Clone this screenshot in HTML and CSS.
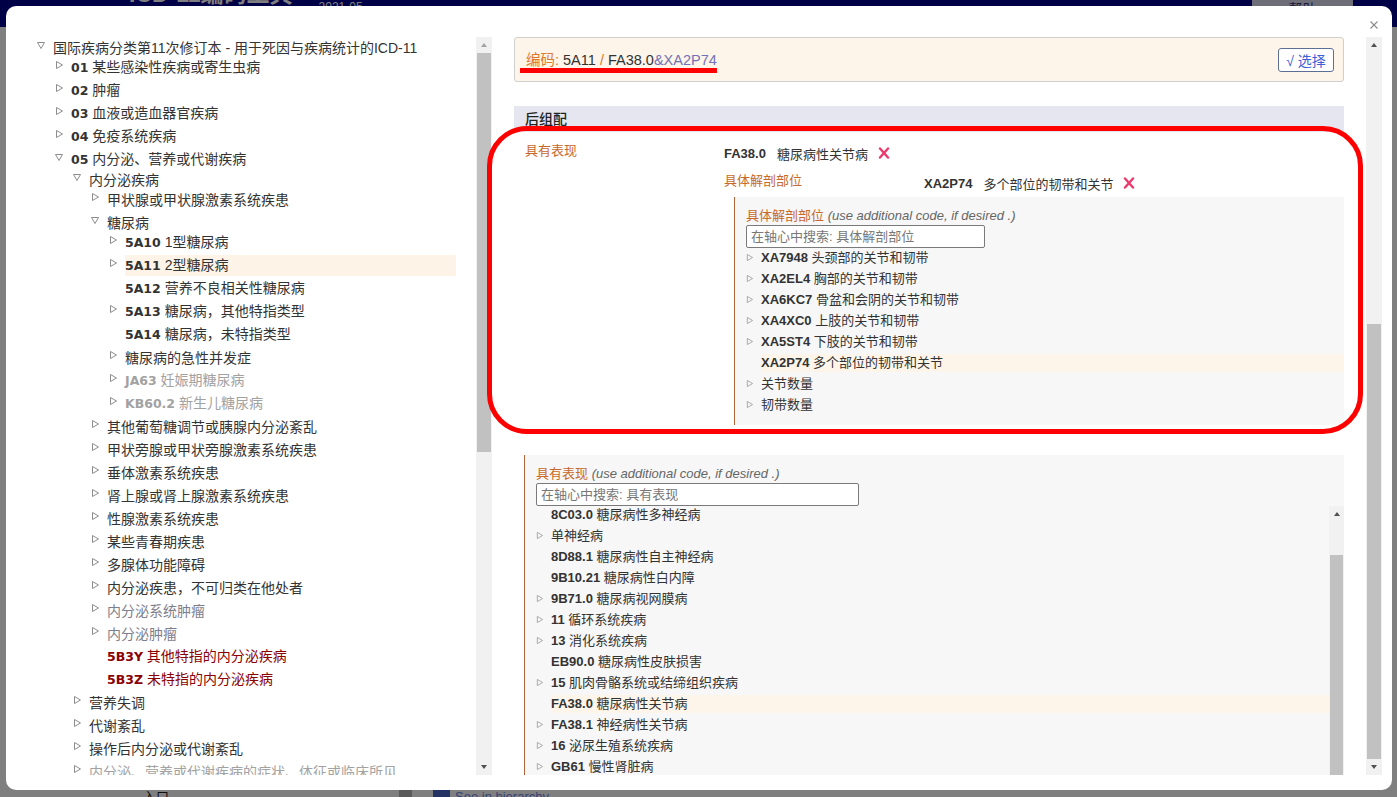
FILE: index.html
```html
<!DOCTYPE html>
<html lang="zh-CN">
<head>
  <meta charset="UTF-8">
  <title>ICD-11编码工具</title>
  <meta name="viewport" content="width=device-width, initial-scale=1.0">
  <link rel="stylesheet" href="styles.css">
</head>
<body>

  <header class="topbar">
    <div class="brand">ICD-11编码工具</div>
    <div class="release">2021-05</div>
    <div class="help-btn">帮助</div>
  </header>
  <main class="page"></main>
  <footer class="page-foot">
    <span class="entry">入口</span>
    <span class="divider"></span>
    <span class="badge"></span>
    <span class="hier">See in hierarchy</span>
  </footer>

  <div class="backdrop"></div>

  <div class="modal">
    <svg class="defs" width="0" height="0">
      <symbol id="tr" viewBox="0 0 8 8"><path d="M1.5 0.5 L7.5 4 L1.5 7.5 Z" fill="none" stroke="currentColor" stroke-width="1"/></symbol>
      <symbol id="td" viewBox="0 0 8 8"><path d="M0.5 1.5 L7.5 1.5 L4 7.5 Z" fill="none" stroke="currentColor" stroke-width="1"/></symbol>
      <symbol id="rm" viewBox="0 0 12 12"><path d="M2 1.5 L10 10.5 M10 1.5 L2 10.5" stroke="currentColor" stroke-width="2.4" stroke-linecap="round"/></symbol>
    </svg>

    <button class="close"><svg width="8" height="8" viewBox="0 0 8 8"><path d="M0.5 0.5 L7.5 7.5 M7.5 0.5 L0.5 7.5" stroke="currentColor" stroke-width="1.1"/></svg></button>

    <!-- left: classification tree -->
    <section class="pane">
      <div class="tree-wrap">
        <ul class="tree">
          <li class="open">
            <div class="row"><svg class="tw"><use href="#td"/></svg><span class="lbl">国际疾病分类第11次修订本 - 用于死因与疾病统计的ICD-11</span></div>
            <ul>
              <li><div class="row"><svg class="tw"><use href="#tr"/></svg><span class="lbl"><b>01</b> 某些感染性疾病或寄生虫病</span></div></li>
              <li><div class="row"><svg class="tw"><use href="#tr"/></svg><span class="lbl"><b>02</b> 肿瘤</span></div></li>
              <li><div class="row"><svg class="tw"><use href="#tr"/></svg><span class="lbl"><b>03</b> 血液或造血器官疾病</span></div></li>
              <li><div class="row"><svg class="tw"><use href="#tr"/></svg><span class="lbl"><b>04</b> 免疫系统疾病</span></div></li>
              <li class="open">
                <div class="row"><svg class="tw"><use href="#td"/></svg><span class="lbl"><b>05</b> 内分泌、营养或代谢疾病</span></div>
                <ul>
                  <li class="open">
                    <div class="row"><svg class="tw"><use href="#td"/></svg><span class="lbl">内分泌疾病</span></div>
                    <ul>
                      <li><div class="row"><svg class="tw"><use href="#tr"/></svg><span class="lbl">甲状腺或甲状腺激素系统疾患</span></div></li>
                      <li class="open">
                        <div class="row"><svg class="tw"><use href="#td"/></svg><span class="lbl">糖尿病</span></div>
                        <ul>
                          <li><div class="row"><svg class="tw"><use href="#tr"/></svg><span class="lbl"><b>5A10</b> 1型糖尿病</span></div></li>
                          <li><div class="row sel"><svg class="tw"><use href="#tr"/></svg><span class="lbl"><b>5A11</b> 2型糖尿病</span></div></li>
                          <li><div class="row"><span class="lbl"><b>5A12</b> 营养不良相关性糖尿病</span></div></li>
                          <li><div class="row"><svg class="tw"><use href="#tr"/></svg><span class="lbl"><b>5A13</b> 糖尿病，其他特指类型</span></div></li>
                          <li><div class="row"><span class="lbl"><b>5A14</b> 糖尿病，未特指类型</span></div></li>
                          <li><div class="row"><svg class="tw"><use href="#tr"/></svg><span class="lbl">糖尿病的急性并发症</span></div></li>
                          <li><div class="row muted"><svg class="tw"><use href="#tr"/></svg><span class="lbl"><b>JA63</b> 妊娠期糖尿病</span></div></li>
                          <li><div class="row muted"><svg class="tw"><use href="#tr"/></svg><span class="lbl"><b>KB60.2</b> 新生儿糖尿病</span></div></li>
                        </ul>
                      </li>
                      <li><div class="row"><svg class="tw"><use href="#tr"/></svg><span class="lbl">其他葡萄糖调节或胰腺内分泌紊乱</span></div></li>
                      <li><div class="row"><svg class="tw"><use href="#tr"/></svg><span class="lbl">甲状旁腺或甲状旁腺激素系统疾患</span></div></li>
                      <li><div class="row"><svg class="tw"><use href="#tr"/></svg><span class="lbl">垂体激素系统疾患</span></div></li>
                      <li><div class="row"><svg class="tw"><use href="#tr"/></svg><span class="lbl">肾上腺或肾上腺激素系统疾患</span></div></li>
                      <li><div class="row"><svg class="tw"><use href="#tr"/></svg><span class="lbl">性腺激素系统疾患</span></div></li>
                      <li><div class="row"><svg class="tw"><use href="#tr"/></svg><span class="lbl">某些青春期疾患</span></div></li>
                      <li><div class="row"><svg class="tw"><use href="#tr"/></svg><span class="lbl">多腺体功能障碍</span></div></li>
                      <li><div class="row"><svg class="tw"><use href="#tr"/></svg><span class="lbl">内分泌疾患，不可归类在他处者</span></div></li>
                      <li><div class="row dim"><svg class="tw"><use href="#tr"/></svg><span class="lbl">内分泌系统肿瘤</span></div></li>
                      <li><div class="row dim"><svg class="tw"><use href="#tr"/></svg><span class="lbl">内分泌肿瘤</span></div></li>
                      <li><div class="row other"><span class="lbl"><b>5B3Y</b> 其他特指的内分泌疾病</span></div></li>
                      <li><div class="row other"><span class="lbl"><b>5B3Z</b> 未特指的内分泌疾病</span></div></li>
                    </ul>
                  </li>
                  <li><div class="row"><svg class="tw"><use href="#tr"/></svg><span class="lbl">营养失调</span></div></li>
                  <li><div class="row"><svg class="tw"><use href="#tr"/></svg><span class="lbl">代谢紊乱</span></div></li>
                  <li><div class="row"><svg class="tw"><use href="#tr"/></svg><span class="lbl">操作后内分泌或代谢紊乱</span></div></li>
                  <li><div class="row muted"><svg class="tw"><use href="#tr"/></svg><span class="lbl">内分泌、营养或代谢疾病的症状、体征或临床所见</span></div></li>
                </ul>
              </li>
            </ul>
          </li>
        </ul>
      </div>
      <div class="sb sb-tree">
        <div class="sb-btn"><i class="arr up"></i></div>
        <div class="sb-thumb"></div>
        <div class="sb-fill"></div>
        <div class="sb-btn"><i class="arr down"></i></div>
      </div>
    </section>

    <!-- right: code and postcoordination -->
    <section class="pane">
      <div class="detail">
        <div class="codebox">
          <span class="code-line"><span class="k">编码:</span> 5A11 <span class="k">/</span> FA38.0<span class="amp">&amp;XA2P74</span></span>
          <button class="pick">√ 选择</button>
        </div>

        <div class="pc-title">后组配</div>

        <div class="pc">
          <div class="pc-label">具有表现</div>
          <div class="pc-body">
            <div class="pc-val"><b>FA38.0</b><span>糖尿病性关节病</span><svg class="rm"><use href="#rm"/></svg></div>
            <div class="pc pc-sub">
              <div class="pc-label">具体解剖部位</div>
              <div class="pc-val"><b>XA2P74</b><span>多个部位的韧带和关节</span><svg class="rm"><use href="#rm"/></svg></div>
            </div>

            <div class="axis">
              <div class="ax-head"><span class="ax-name">具体解剖部位</span> <em>(use additional code, if desired .)</em></div>
              <input class="ax-search" placeholder="在轴心中搜索: 具体解剖部位">
              <div class="ax-row"><svg class="tw"><use href="#tr"/></svg><span class="lbl"><b>XA7948</b> 头颈部的关节和韧带</span></div>
              <div class="ax-row"><svg class="tw"><use href="#tr"/></svg><span class="lbl"><b>XA2EL4</b> 胸部的关节和韧带</span></div>
              <div class="ax-row"><svg class="tw"><use href="#tr"/></svg><span class="lbl"><b>XA6KC7</b> 骨盆和会阴的关节和韧带</span></div>
              <div class="ax-row"><svg class="tw"><use href="#tr"/></svg><span class="lbl"><b>XA4XC0</b> 上肢的关节和韧带</span></div>
              <div class="ax-row"><svg class="tw"><use href="#tr"/></svg><span class="lbl"><b>XA5ST4</b> 下肢的关节和韧带</span></div>
              <div class="ax-row sel"><span class="lbl"><b>XA2P74</b> 多个部位的韧带和关节</span></div>
              <div class="ax-row"><svg class="tw"><use href="#tr"/></svg><span class="lbl">关节数量</span></div>
              <div class="ax-row"><svg class="tw"><use href="#tr"/></svg><span class="lbl">韧带数量</span></div>
            </div>
          </div>
        </div>

        <div class="axis axis-top">
          <div class="ax-head"><span class="ax-name">具有表现</span> <em>(use additional code, if desired .)</em></div>
          <input class="ax-search wide" placeholder="在轴心中搜索: 具有表现">
          <div class="ax-list">
            <div class="ax-items">
              <div class="ax-row"><span class="lbl"><b>8C03.0</b> 糖尿病性多神经病</span></div>
              <div class="ax-row"><svg class="tw"><use href="#tr"/></svg><span class="lbl">单神经病</span></div>
              <div class="ax-row"><span class="lbl"><b>8D88.1</b> 糖尿病性自主神经病</span></div>
              <div class="ax-row"><span class="lbl"><b>9B10.21</b> 糖尿病性白内障</span></div>
              <div class="ax-row"><svg class="tw"><use href="#tr"/></svg><span class="lbl"><b>9B71.0</b> 糖尿病视网膜病</span></div>
              <div class="ax-row"><svg class="tw"><use href="#tr"/></svg><span class="lbl"><b>11</b> 循环系统疾病</span></div>
              <div class="ax-row"><svg class="tw"><use href="#tr"/></svg><span class="lbl"><b>13</b> 消化系统疾病</span></div>
              <div class="ax-row"><span class="lbl"><b>EB90.0</b> 糖尿病性皮肤损害</span></div>
              <div class="ax-row"><svg class="tw"><use href="#tr"/></svg><span class="lbl"><b>15</b> 肌肉骨骼系统或结缔组织疾病</span></div>
              <div class="ax-row sel"><span class="lbl"><b>FA38.0</b> 糖尿病性关节病</span></div>
              <div class="ax-row"><svg class="tw"><use href="#tr"/></svg><span class="lbl"><b>FA38.1</b> 神经病性关节病</span></div>
              <div class="ax-row"><svg class="tw"><use href="#tr"/></svg><span class="lbl"><b>16</b> 泌尿生殖系统疾病</span></div>
              <div class="ax-row"><svg class="tw"><use href="#tr"/></svg><span class="lbl"><b>GB61</b> 慢性肾脏病</span></div>
              <div class="ax-row"><svg class="tw"><use href="#tr"/></svg><span class="lbl"><b>GB90</b> 肾小管功能障碍</span></div>
            </div>
            <div class="sb sb-list">
              <div class="sb-btn"><i class="arr up"></i></div>
              <div class="sb-thumb"></div>
            </div>
          </div>
        </div>
      </div>
      <div class="sb sb-detail">
        <div class="sb-btn"><i class="arr up"></i></div>
        <div class="sb-fill"></div>
        <div class="sb-thumb"></div>
        <div class="sb-btn"><i class="arr down"></i></div>
      </div>
    </section>

    <!-- red marks drawn on the screenshot -->
    <div class="ring"></div>
  </div>

</body>
</html>
```

FILE: styles.css
```css
* {
  box-sizing: border-box;
}

body {
  margin: 0;
  height: 100vh;
  overflow: hidden;
  display: flex;
  flex-direction: column;
  background: #fff;
  color: #333;
  font-family: "Liberation Sans", "Noto Sans CJK SC", sans-serif;
  font-size: 14px;
}

/* page behind the dialog */
.topbar {
  flex: none;
  height: 27px;
  display: flex;
  align-items: flex-start;
  padding-left: 129px;
  background: #00008c;
  color: #fff;
  overflow: hidden;
}

.brand {
  font-size: 23px;
  font-weight: bold;
  line-height: 23px;
  margin-top: -17px;
}

.release {
  margin-left: 26px;
  font-size: 12px;
  line-height: 14px;
}

.help-btn {
  margin-left: auto;
  margin-right: 44px;
  width: 101px;
  height: 26px;
  padding-top: 1px;
  background: #dcdcf0;
  color: #383878;
  text-align: center;
  line-height: 16px;
}

.page {
  flex: 1;
}

.page-foot {
  flex: none;
  height: 8px;
  display: flex;
  align-items: flex-start;
  font-size: 13px;
  line-height: 16px;
  overflow: hidden;
}

.entry {
  margin-left: 143px;
  color: #222;
}

.divider {
  margin-left: 230px;
  width: 13px;
  height: 8px;
  background: #b4b4b4;
}

.badge {
  margin-left: 21px;
  width: 17px;
  height: 8px;
  background: #4a64c8;
}

.hier {
  margin-left: 5px;
  color: #7088e8;
}

.backdrop {
  position: fixed;
  inset: 0;
  background: rgba(0, 0, 0, 0.5);
}

/* dialog */
.modal {
  position: fixed;
  left: 6px;
  top: 6px;
  width: 1386px;
  height: 784px;
  padding: 31px 10px 15px 16px;
  background: #fff;
  border-radius: 10px;
  display: grid;
  grid-template-columns: 470px 878px;
  column-gap: 12px;
}

.defs {
  position: absolute;
}

.close {
  position: absolute;
  top: 15px;
  right: 14px;
  width: 8px;
  height: 8px;
  padding: 0;
  border: none;
  background: none;
  color: #8a8a8a;
  display: flex;
}

.pane {
  display: flex;
  height: 738px;
  overflow: hidden;
}

/* scrollbars */
.sb {
  flex: none;
  width: 16px;
  display: flex;
  flex-direction: column;
  background: #f1f1f1;
}

.sb-btn {
  flex: none;
  height: 16px;
  display: flex;
  align-items: center;
  justify-content: center;
}

.sb-fill {
  flex: 1;
}

.sb-thumb {
  flex: none;
  margin: 0 1px;
  background: #c1c1c1;
}

.arr {
  width: 0;
  height: 0;
  border-left: 3.5px solid transparent;
  border-right: 3.5px solid transparent;
}

.arr.up {
  border-bottom: 4px solid #505050;
}

.arr.down {
  border-top: 4px solid #505050;
}

.sb-tree .sb-thumb {
  height: 399px;
}

.sb-tree .arr.up {
  border-bottom-color: #a3a3a3;
}

.sb-detail .sb-thumb {
  height: 435px;
}

.sb-list {
  width: 15px;
  height: 290px;
}

.sb-list .sb-thumb {
  margin-top: 33px;
  height: 240px;
}

/* tree */
.tree-wrap {
  flex: 1;
  overflow: hidden;
}

.tree,
.tree ul {
  list-style: none;
  margin: 0;
  padding: 0 0 0 18px;
}

.tree {
  margin-top: -1px;
  padding-left: 31px;
}

.tree li.open > ul {
  margin-top: -3px;
}

.row {
  display: flex;
  align-items: center;
  height: 23px;
  white-space: nowrap;
}

.tw {
  flex: none;
  width: 8px;
  height: 8px;
  margin-left: -16px;
  margin-right: 8px;
  align-self: flex-start;
  margin-top: 5px;
  color: #8c8c8c;
}

.lbl {
  flex: 1;
  line-height: 20px;
  margin-right: 20px;
}

.tree b {
  font-family: "DejaVu Sans", sans-serif;
  font-size: 12.5px;
}

.row.sel .lbl {
  background: #fdf3e6;
}

.row.muted {
  color: #a2a2a2;
}

.row.dim {
  color: #7e7e8c;
}

.row.other {
  color: #8b0000;
}

/* right side */
.detail {
  flex: 1;
  padding: 0 22px 0 10px;
  font-size: 13px;
}

.codebox {
  height: 45px;
  display: flex;
  align-items: center;
  justify-content: space-between;
  padding: 0 9px 0 11px;
  background: #fdf5e9;
  border: 1px solid #cfcfcf;
  border-radius: 3px;
}

.code-line {
  position: relative;
  font-size: 14.5px;
  line-height: 18px;
  color: #333;
}

.code-line::after {
  content: '';
  position: absolute;
  left: -6px;
  right: 0;
  top: 17px;
  height: 5px;
  background: #f00;
}

.code-line .k {
  color: #dd7a2e;
}

.code-line .amp {
  color: #7272b6;
}

.pick {
  height: 24px;
  width: 56px;
  padding: 0;
  background: #fff;
  border: 1px solid #5e6f95;
  border-radius: 3px;
  color: #3d62d6;
  font-family: inherit;
  font-size: 14px;
}

.pc-title {
  margin-top: 24px;
  height: 26px;
  line-height: 26px;
  padding-left: 11px;
  background: #e5e6ef;
  color: #222;
  font-size: 14px;
  font-weight: 500;
}

.pc {
  display: grid;
  grid-template-columns: 199px 1fr;
  padding: 10px 0 0 11px;
}

.pc-sub {
  grid-template-columns: 200px 1fr;
  padding: 0;
  margin-top: 8px;
}

.pc-label {
  color: #c8692a;
  line-height: 18px;
}

.pc-val {
  display: flex;
  align-items: center;
  height: 22px;
  white-space: nowrap;
}

.pc-val b {
  margin-right: 11px;
}

.rm {
  width: 12px;
  height: 12px;
  margin-left: 10px;
  color: #ec3a6c;
}

.detail b {
  font-weight: bold;
  color: #333;
}

.axis {
  margin: 3px 0 0 10px;
  padding: 10px 0 10px 11px;
  background: #f7f7f7;
  border-left: 1px solid #b0643a;
}

.axis-top {
  margin-top: 30px;
  padding-bottom: 0;
}

.ax-head {
  line-height: 18px;
  white-space: nowrap;
}

.ax-name {
  color: #c8692a;
}

.ax-head em {
  color: #666;
}

.ax-search {
  display: block;
  width: 239px;
  height: 23px;
  margin: 0;
  padding: 0 4px;
  border: 1px solid #7a7a7a;
  border-radius: 2px;
  background: #fff;
  font-family: inherit;
  font-size: 13px;
  outline: none;
}

.ax-search::placeholder {
  color: #777;
}

.ax-search.wide {
  width: 323px;
}

.ax-row {
  display: flex;
  align-items: center;
  height: 21px;
  padding-left: 15px;
  white-space: nowrap;
}

.ax-row .tw {
  width: 7px;
  height: 7px;
  margin: 0 8px 0 -15px;
  align-self: center;
  color: #a0a0a0;
}

.ax-row .lbl {
  line-height: 18px;
  margin-right: 0;
}

.ax-row.sel .lbl {
  background: #fdf5e9;
}

.ax-list {
  display: flex;
  height: 290px;
  overflow: hidden;
}

.ax-items {
  flex: 1;
  margin-top: -2px;
}

.axis .ax-search + .ax-row {
  margin-top: -1px;
}

/* annotation ring */
.ring {
  position: absolute;
  left: 481px;
  top: 120px;
  width: 876px;
  height: 308px;
  border: 5px solid #f00;
  border-radius: 40px;
  pointer-events: none;
}
```
